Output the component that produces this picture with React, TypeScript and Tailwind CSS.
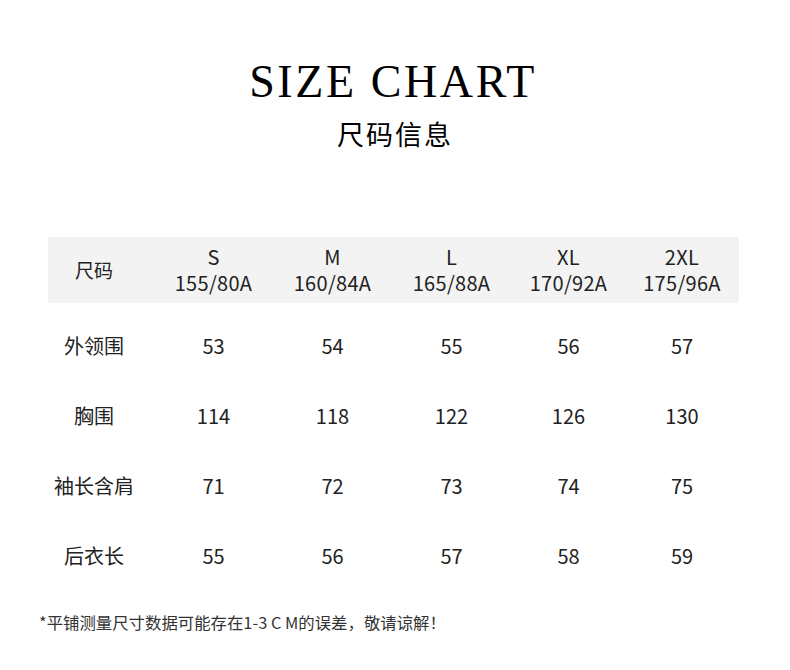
export default function App() {
  const sizes = [
    { s: "S", b: "155/80A" },
    { s: "M", b: "160/84A" },
    { s: "L", b: "165/88A" },
    { s: "XL", b: "170/92A" },
    { s: "2XL", b: "175/96A" },
  ];
  const rows = [
    { label: "外领围", v: ["53", "54", "55", "56", "57"] },
    { label: "胸围", v: ["114", "118", "122", "126", "130"] },
    { label: "袖长含肩", v: ["71", "72", "73", "74", "75"] },
    { label: "后衣长", v: ["55", "56", "57", "58", "59"] },
  ];
  const cjk = { fontFamily: '"Noto Sans CJK SC", "Noto Sans", sans-serif' };
  const grid = "grid grid-cols-[106px_119px_119px_119px_115px_112px]";
  return (
    <div className="w-[790px] h-[670px] bg-white text-[#222] flex flex-col" style={cjk}>
      <div className="pt-[53px] flex flex-col items-center">
        <div
          className="text-[46px] leading-[58px] text-black tracking-[2.6px] pl-[0px] mr-[4px]"
          style={{ fontFamily: '"Liberation Serif", "Times New Roman", serif' }}
        >
          SIZE CHART
        </div>
        <div className="mt-[3px] text-[27px] leading-[40px] tracking-[2px] text-black">尺码信息</div>
      </div>
      <div className="mt-[83px] ml-[48px] w-[691px]">
        <div className={`${grid} bg-[#f3f3f3] h-[66px] items-center text-[20px] leading-[26px]`}>
          <div className="text-center pr-[14px] text-[19px]">尺码</div>
          {sizes.map((x) => (
            <div key={x.s} className="text-center flex flex-col tracking-[0.3px]">
              <span>{x.s}</span>
              <span>{x.b}</span>
            </div>
          ))}
        </div>
        <div className="mt-[8px]">
          {rows.map((r) => (
            <div key={r.label} className={`${grid} h-[70px] items-center text-[20px]`}>
              <div className="text-center pr-[14px]">{r.label}</div>
              {r.v.map((v, i) => (
                <div key={i} className="text-center">{v}</div>
              ))}
            </div>
          ))}
        </div>
      </div>
      <div className="mt-[20px] ml-[39px] text-[16.4px] leading-[22px] text-[#333]">
        *平铺测量尺寸数据可能存在1-3 C M的误差，敬请谅解！
      </div>
    </div>
  );
}
